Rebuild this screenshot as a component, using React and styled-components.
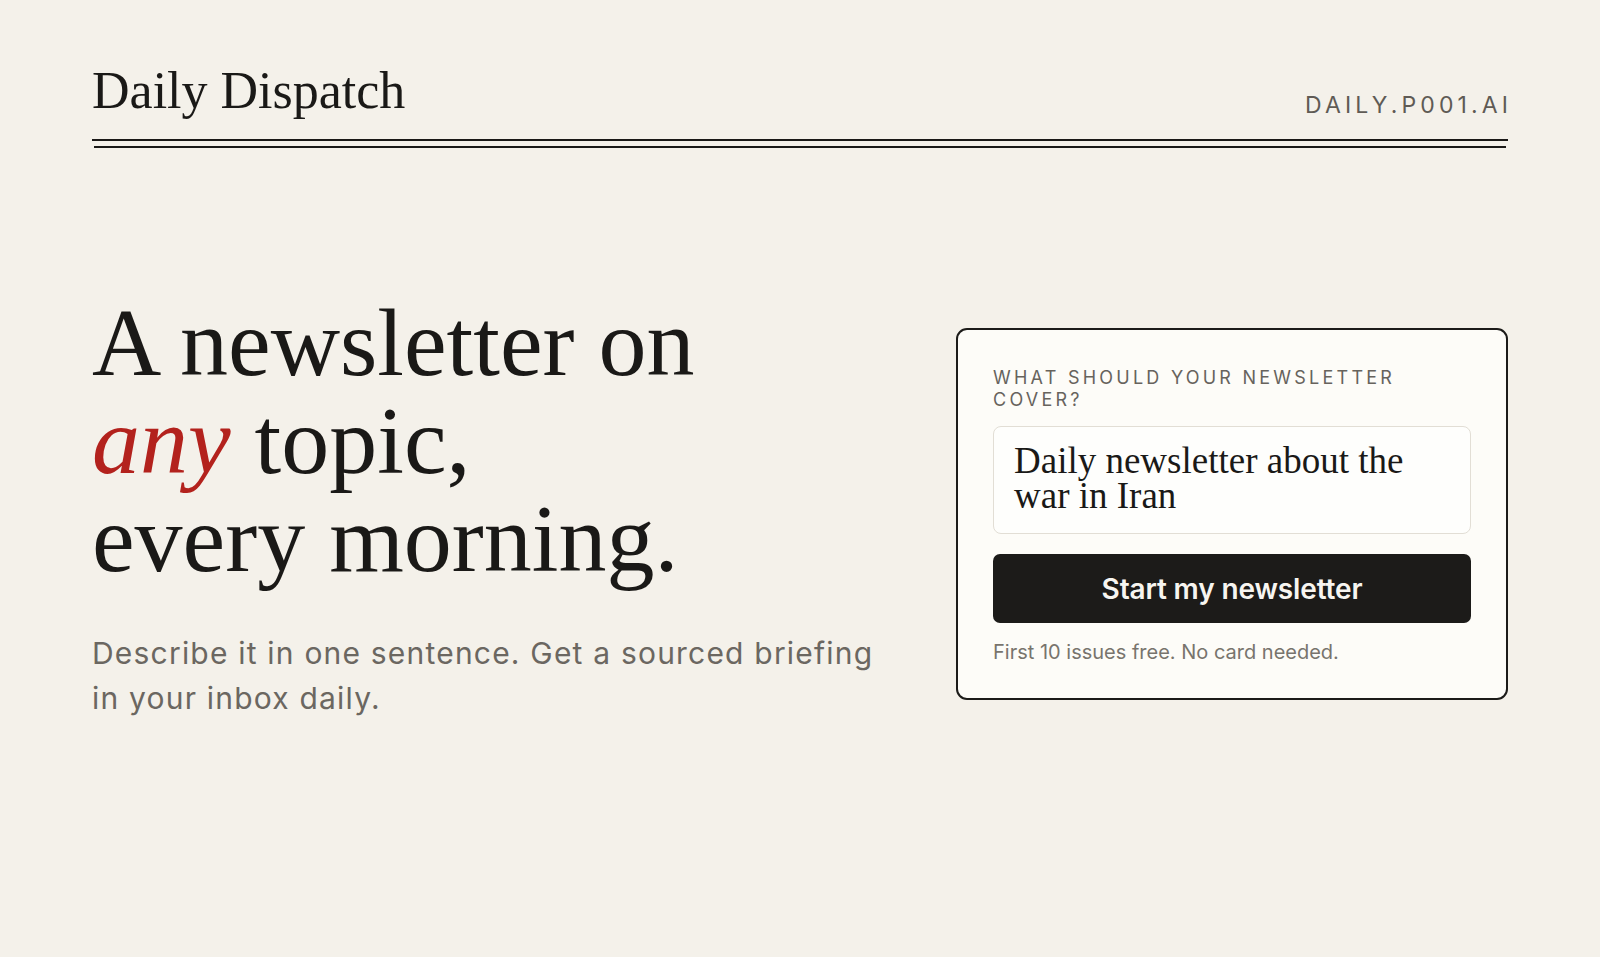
import React from 'react'
import styled, { createGlobalStyle } from 'styled-components'

const GlobalStyle = createGlobalStyle`
  html, body {
    margin: 0;
    padding: 0;
    background: #f4f1ea;
  }
  body {
    font-family: Inter, "Liberation Sans", sans-serif;
    color: #1a1917;
  }
  * { box-sizing: border-box; }
`

function App() {
  return (
    <>
      <GlobalStyle />
      <Page>
        <Masthead>
          <Brand>Daily Dispatch</Brand>
          <Domain>daily.p001.ai</Domain>
        </Masthead>
        <Rule />
        <Rule inset />

        <Hero>
          <Pitch>
            <Headline>
              A newsletter on
              <br />
              <Accent>any</Accent> topic,
              <br />
              every morning.
            </Headline>
            <Lede>
              Describe it in one sentence. Get a sourced briefing in your inbox daily.
            </Lede>
          </Pitch>

          <SignupCard>
            <FieldLabel htmlFor="topic">What should your newsletter cover?</FieldLabel>
            <TopicInput id="topic" defaultValue="Daily newsletter about the war in Iran" />
            <StartButton type="button">Start my newsletter</StartButton>
            <FinePrint>First 10 issues free. No card needed.</FinePrint>
          </SignupCard>
        </Hero>
      </Page>
    </>
  )
}

export default App

const Page = styled.div`
  max-width: 1416px;
  margin: 0 auto;
  padding-top: 65px;
  min-height: 957px;
`

const Masthead = styled.header`
  display: flex;
  justify-content: space-between;
  align-items: flex-end;
  padding-bottom: 22px;
`

const Brand = styled.h1`
  margin: 0;
  font-family: "Liberation Serif", serif;
  font-weight: 400;
  font-size: 52px;
  line-height: 1;
  color: #1a1917;
`

const Domain = styled.span`
  font-size: 23px;
  line-height: 1;
  text-transform: uppercase;
  letter-spacing: 0.18em;
  color: #5f5b55;
  margin-right: -0.18em;
`

const Rule = styled.div`
  height: 2px;
  background: #1a1917;
  margin: ${p => (p.inset ? '5px 2px 0' : '0')};
`

const Hero = styled.section`
  display: grid;
  grid-template-columns: 1fr 552px;
  column-gap: 76px;
  align-items: start;
  padding-top: 146px;
`

const Pitch = styled.div`
  display: flex;
  flex-direction: column;
`

const Headline = styled.h2`
  margin: 0;
  font-family: "Liberation Serif", serif;
  font-weight: 400;
  font-size: 96px;
  line-height: 98px;
  color: #1a1917;
`

const Accent = styled.em`
  font-style: italic;
  color: #b3221d;
`

const Lede = styled.p`
  margin: 43px 0 0;
  font-size: 30px;
  line-height: 45px;
  letter-spacing: 0.04em;
  color: #6b6761;
`

const SignupCard = styled.div`
  margin-top: 34px;
  display: flex;
  flex-direction: column;
  background: #fdfcf8;
  border: 2px solid #1c1b19;
  border-radius: 11px;
  padding: 37px 35px 32px;
`

const FieldLabel = styled.label`
  font-size: 18px;
  line-height: 21.6px;
  text-transform: uppercase;
  letter-spacing: 0.18em;
  color: #67635d;
`

const TopicInput = styled.textarea`
  margin-top: 16px;
  height: 108px;
  resize: none;
  border: 1.5px solid #e2ded5;
  border-radius: 8px;
  background: #fefefc;
  padding: 16px 20px 16px;
  font-family: "Liberation Serif", serif;
  font-size: 37px;
  line-height: 35px;
  color: #1a1917;
  overflow: hidden;
  outline: none;
`

const StartButton = styled.button`
  margin-top: 20px;
  height: 69px;
  border: none;
  border-radius: 7px;
  background: #1c1b19;
  color: #f7f5f0;
  font-family: Inter, "Liberation Sans", sans-serif;
  font-weight: 600;
  font-size: 28px;
  letter-spacing: -0.005em;
  cursor: pointer;
`

const FinePrint = styled.p`
  margin: 15px 0 0;
  font-size: 20px;
  line-height: 28px;
  color: #78746d;
`
